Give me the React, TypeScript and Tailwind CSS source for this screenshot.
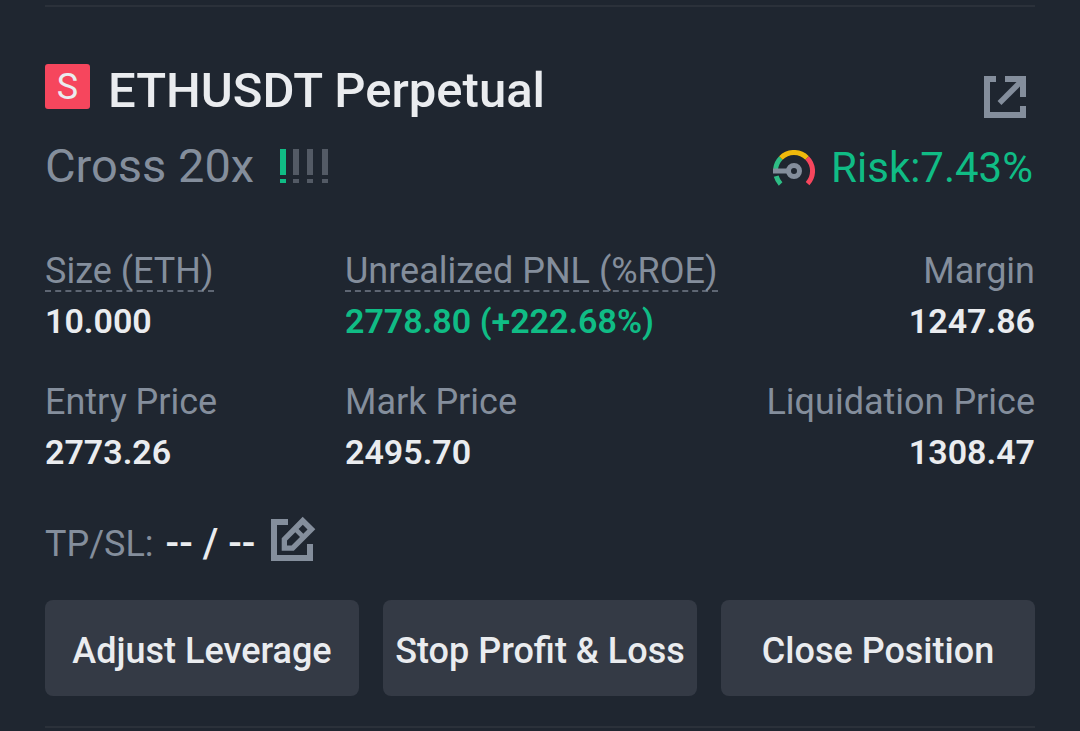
import React from "react";

function ShareIcon() {
  return (
    <svg width="42" height="42" viewBox="0 0 42 42" fill="none" stroke="#848e9c" strokeWidth="6" aria-hidden="true">
      <path d="M12 3H3V39H39V30" />
      <path d="M21 3H39V21" />
      <path d="M15.5 27L38 4.5" strokeWidth="5.5" />
    </svg>
  );
}

function EditIcon() {
  return (
    <svg width="45" height="45" viewBox="0 -3 45 45" aria-hidden="true">
      <path d="M17 3H3V39H39V25" fill="none" stroke="#848e9c" strokeWidth="6" />
      <path
        fill="#848e9c"
        fillRule="evenodd"
        d="M31.7 -2.3L44.3 10.3L22.8 31.7H10.7V19.3ZM16 21.5V26.5H20.5L29 18L24.3 13.3ZM27.6 10L32.3 14.7L36.5 10.4L31.8 5.7Z"
      />
    </svg>
  );
}

function GaugeIcon() {
  return (
    <svg width="42" height="36" viewBox="0 0 42 36" fill="none" strokeWidth="5" aria-hidden="true">
      <path d="M2.6 19A18.5 18.5 0 0 1 7.9 7.9" stroke="#2ebd85" />
      <path d="M7.9 7.9A18.5 18.5 0 0 1 34.1 7.9" stroke="#f0b90b" />
      <path d="M34.1 7.9A18.5 18.5 0 0 1 34.6 33.6" stroke="#f6465d" />
      <path d="M3.2 26.2A18.5 18.5 0 0 0 7.6 34" stroke="#2ebd85" />
      <path d="M0 21H15" stroke="#848e9c" />
      <circle cx="21" cy="21" r="5.5" stroke="#848e9c" />
    </svg>
  );
}

function LevelMarks() {
  return (
    <svg width="48" height="34" viewBox="0 0 48 34" role="img" aria-label="Level 1 of 4">
      <path d="M0 0h6v26h-6zM0 30h6v4h-6z" fill="#10bc85" />
      <path
        d="M13 0h6v26h-6zM13 30h6v4h-6zM27 0h6v26h-6zM27 30h6v4h-6zM42 0h6v26h-6zM42 30h6v4h-6z"
        fill="#535a65"
      />
    </svg>
  );
}

type StatProps = { label: string; value: string; hint?: boolean; tone?: string; align?: string };

function Stat({ label, value, hint, tone = "text-[#eaecef]", align = "items-start" }: StatProps) {
  return (
    <div className={`flex flex-col whitespace-nowrap ${align}`}>
      <dt className="flex h-[50px] items-start text-[36px] text-[#848e9c]">
        <span className={hint ? "h-[46px] border-b-2 border-dashed border-[#5e6673] leading-[50px]" : "leading-[50px]"}>
          {label}
        </span>
      </dt>
      <dd className={`text-[34px] leading-[50px] font-semibold ${tone}`}>{value}</dd>
    </div>
  );
}

export default function App() {
  return (
    <main className="min-h-screen bg-[#1f2630] px-[45px] pt-[5px] font-['Roboto',sans-serif] text-[#eaecef]">
      <section className="border-y-2 border-[#2b313a] pt-[57px] pb-[30px]">
        <header className="flex justify-between">
          <div className="flex items-start gap-[18px]">
            <span className="flex size-[45px] items-center justify-center rounded-[3px] bg-[#f6465d] text-[36px]">S</span>
            <h1 className="text-[49px] leading-[54px] font-medium">ETHUSDT Perpetual</h1>
          </div>
          <button type="button" aria-label="Share position" className="mr-[9px] self-end">
            <ShareIcon />
          </button>
        </header>

        <div className="mt-[14px] flex items-start justify-between">
          <div className="flex items-center gap-[26px] text-[47px] leading-[68px] text-[#848e9c]">
            <span>Cross 20x</span>
            <LevelMarks />
          </div>
          <div className="flex items-center gap-4 pr-0.5 text-[42px] leading-[72px] text-[#10bc85]">
            <GaugeIcon />
            <span>Risk:7.43%</span>
          </div>
        </div>

        <dl className="mt-[42px] grid grid-cols-[300px_1fr_auto] gap-y-[31px]">
          <Stat label="Size (ETH)" value="10.000" hint />
          <Stat label="Unrealized PNL (%ROE)" value="2778.80 (+222.68%)" hint tone="text-[#10bc85]" />
          <Stat label="Margin" value="1247.86" align="items-end" />
          <Stat label="Entry Price" value="2773.26" />
          <Stat label="Mark Price" value="2495.70" />
          <Stat label="Liquidation Price" value="1308.47" align="items-end" />
        </dl>

        <div className="mt-[39px] flex items-start text-[36px] leading-[56px]">
          <span className="text-[#848e9c]">TP/SL:</span>
          <span className="ml-3 text-[40px] font-medium">-- / --</span>
          <button type="button" aria-label="Edit TP/SL" className="ml-4">
            <EditIcon />
          </button>
        </div>

        <div className="mt-7 grid grid-cols-3 gap-6 text-[36px] font-medium whitespace-nowrap">
          <button type="button" className="h-24 rounded-lg bg-[#343a45] pt-1.5">Adjust Leverage</button>
          <button type="button" className="h-24 rounded-lg bg-[#343a45] pt-1.5">Stop Profit &amp; Loss</button>
          <button type="button" className="h-24 rounded-lg bg-[#343a45] pt-1.5">Close Position</button>
        </div>
      </section>
    </main>
  );
}
